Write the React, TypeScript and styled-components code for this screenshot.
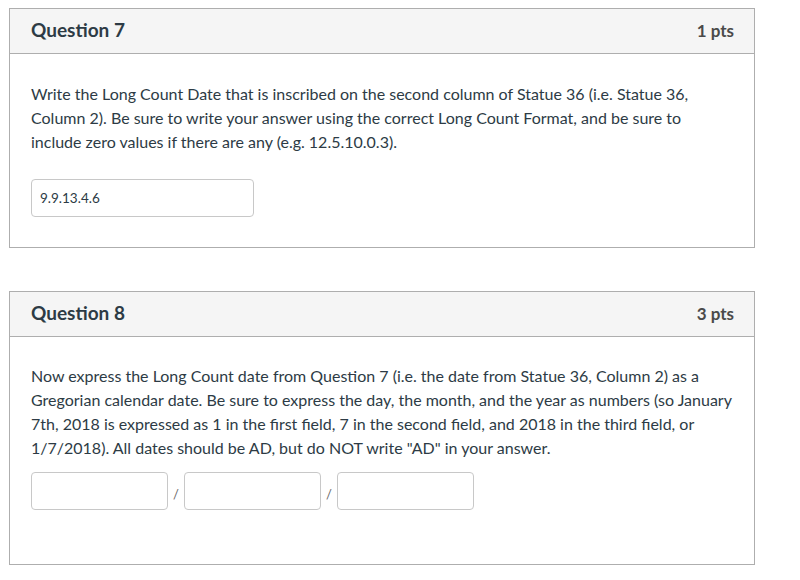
import styled, { createGlobalStyle } from "styled-components";

const GlobalStyle = createGlobalStyle`
  body {
    margin: 0;
    background: #ffffff;
    font-family: Lato, "Open Sans", sans-serif;
    color: #2d3b45;
  }
`;

const Page = styled.main`
  padding: 8px 0 0 9px;
  width: 746px;
  display: flex;
  flex-direction: column;
  gap: 43px;
`;

const Card = styled.section`
  border: 1px solid #aeaeae;
  background: #fff;
`;

const Header = styled.header`
  height: 45px;
  box-sizing: border-box;
  background: #f5f5f5;
  border-bottom: 1px solid #aeaeae;
  display: flex;
  align-items: center;
  justify-content: space-between;
  padding: 0 20px 0 21px;
`;

const Title = styled.h2`
  margin: 0 0 4px;
  font-size: 19px;
  font-weight: 700;
  color: #2d3b45;
`;

const Points = styled.span`
  font-size: 17px;
  font-weight: 700;
  color: #4a4a4a;
  margin-bottom: 1px;
`;

const Body = styled.div<{ $top: number; $bottom: number }>`
  padding: ${(p) => p.$top}px 20px ${(p) => p.$bottom}px 21px;
`;

const Text = styled.p<{ $gap: number }>`
  margin: 0 0 ${(p) => p.$gap}px;
  font-size: 16px;
  line-height: 24px;
  color: #2d3b45;
`;

const Field = styled.div<{ $width: number }>`
  width: ${(p) => p.$width}px;
  height: 38px;
  box-sizing: border-box;
  border: 1px solid #c8c8c8;
  border-radius: 4px;
  display: flex;
  align-items: center;
  padding: 0 8px;
  font-size: 13.5px;
  color: #2d3b45;
`;

const FieldRow = styled.div`
  display: flex;
  align-items: center;
`;

const Slash = styled.span`
  width: 16px;
  text-align: center;
  font-size: 13px;
  color: #666;
  align-self: flex-end;
  padding-bottom: 8px;
`;

export default function App() {
  return (
    <>
      <GlobalStyle />
      <Page>
        <Card>
          <Header>
            <Title>Question 7</Title>
            <Points>1 pts</Points>
          </Header>
          <Body $top={28} $bottom={30}>
            <Text $gap={25}>
              Write the Long Count Date that is inscribed on the second column of Statue 36 (i.e. Statue 36,
              Column 2). Be sure to write your answer using the correct Long Count Format, and be sure to
              include zero values if there are any (e.g. 12.5.10.0.3).
            </Text>
            <Field $width={223}>9.9.13.4.6</Field>
          </Body>
        </Card>

        <Card>
          <Header>
            <Title>Question 8</Title>
            <Points>3 pts</Points>
          </Header>
          <Body $top={27} $bottom={54}>
            <Text $gap={12}>
              Now express the Long Count date from Question 7 (i.e. the date from Statue 36, Column 2) as a
              Gregorian calendar date. Be sure to express the day, the month, and the year as numbers (so January
              7th, 2018 is expressed as 1 in the first field, 7 in the second field, and 2018 in the third field, or
              1/7/2018). All dates should be AD, but do NOT write "AD" in your answer.
            </Text>
            <FieldRow>
              <Field $width={137} />
              <Slash>/</Slash>
              <Field $width={137} />
              <Slash>/</Slash>
              <Field $width={137} />
            </FieldRow>
          </Body>
        </Card>
      </Page>
    </>
  );
}
